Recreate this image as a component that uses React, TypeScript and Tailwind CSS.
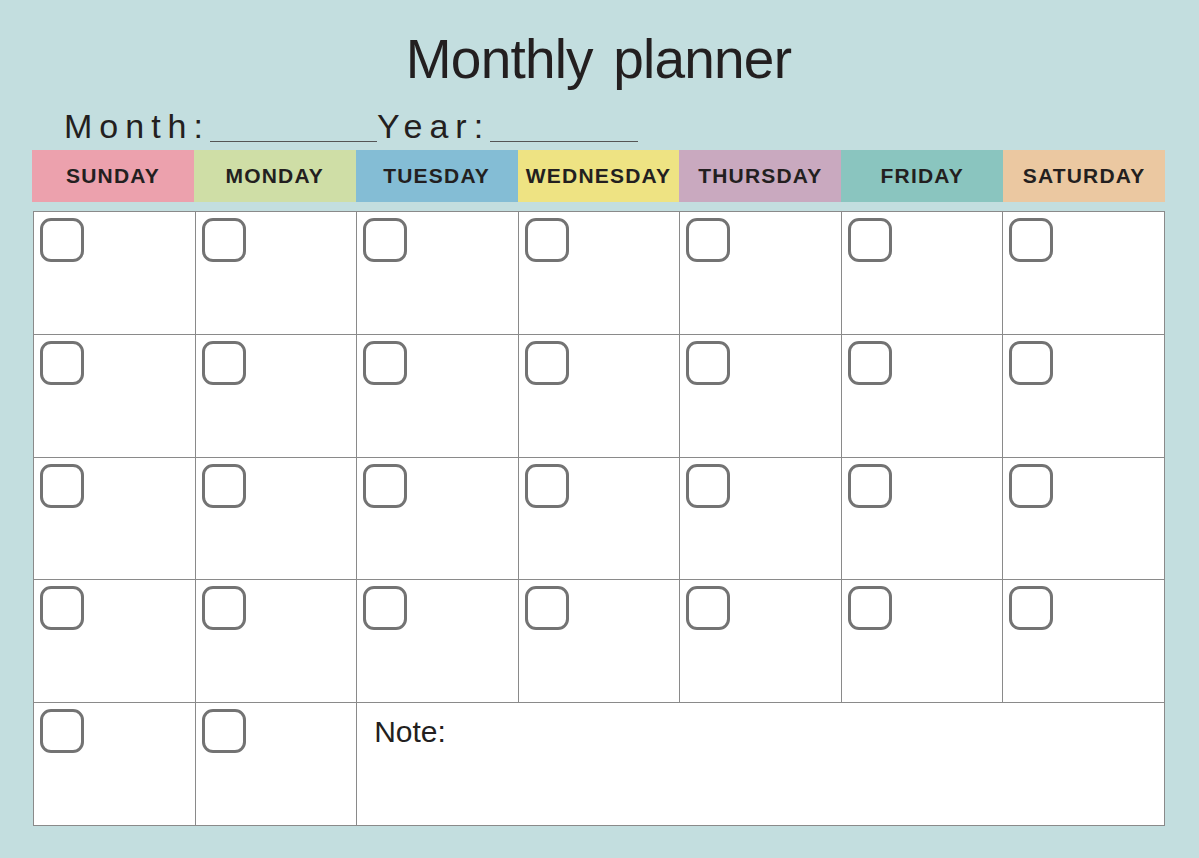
import React from "react";

const days = [
  { name: "SUNDAY", bg: "bg-[#eca1ad]" },
  { name: "MONDAY", bg: "bg-[#cfdea6]" },
  { name: "TUESDAY", bg: "bg-[#84bdd5]" },
  { name: "WEDNESDAY", bg: "bg-[#eee383]" },
  { name: "THURSDAY", bg: "bg-[#c9a9bf]" },
  { name: "FRIDAY", bg: "bg-[#8ac5bf]" },
  { name: "SATURDAY", bg: "bg-[#ebc8a1]" },
];

const Box = () => (
  <div className="ml-[6px] mt-[6px] h-[44px] w-[44px] rounded-[11px] border-[3px] border-[#737373]" />
);

export default function App() {
  const cells = Array.from({ length: 28 });

  return (
    <div
      className="flex h-[858px] w-[1199px] flex-col bg-[#c3dedf] pl-[32px] text-[#231f20]"
      style={{ fontFamily: '"Liberation Sans", Arial, sans-serif' }}
    >
      <div className="w-[1133px]">
        <h1 className="mt-[32px] text-center text-[55px] leading-none tracking-[-0.8px] [word-spacing:6px]">
          Monthly planner
        </h1>

        <div className="mt-[22px] flex h-[34px] items-end pl-[32px] text-[34px] leading-none">
          <span className="tracking-[7px]">Month:</span>
          <span className="mb-[1px] h-full w-[167px] border-b-[1.5px] border-[#555]" />
          <span className="tracking-[7px]">Year:</span>
          <span className="mb-[1px] h-full w-[148px] border-b-[1.5px] border-[#555]" />
        </div>

        <div className="mt-[7px] grid h-[52px] grid-cols-7">
          {days.map((d) => (
            <div
              key={d.name}
              className={`${d.bg} flex items-center justify-center text-[21px] font-bold tracking-[1.2px]`}
            >
              {d.name}
            </div>
          ))}
        </div>

        <div className="ml-px mt-[9px] grid h-[615px] grid-cols-7 grid-rows-5 gap-px bg-[#8a8a8a] p-px">
          {cells.map((_, i) => (
            <div key={i} className="bg-white">
              <Box />
            </div>
          ))}
          <div className="bg-white">
            <Box />
          </div>
          <div className="bg-white">
            <Box />
          </div>
          <div className="col-span-5 bg-white pl-[17px] pt-[14px] text-[30px] leading-none">
            Note:
          </div>
        </div>
      </div>
    </div>
  );
}
